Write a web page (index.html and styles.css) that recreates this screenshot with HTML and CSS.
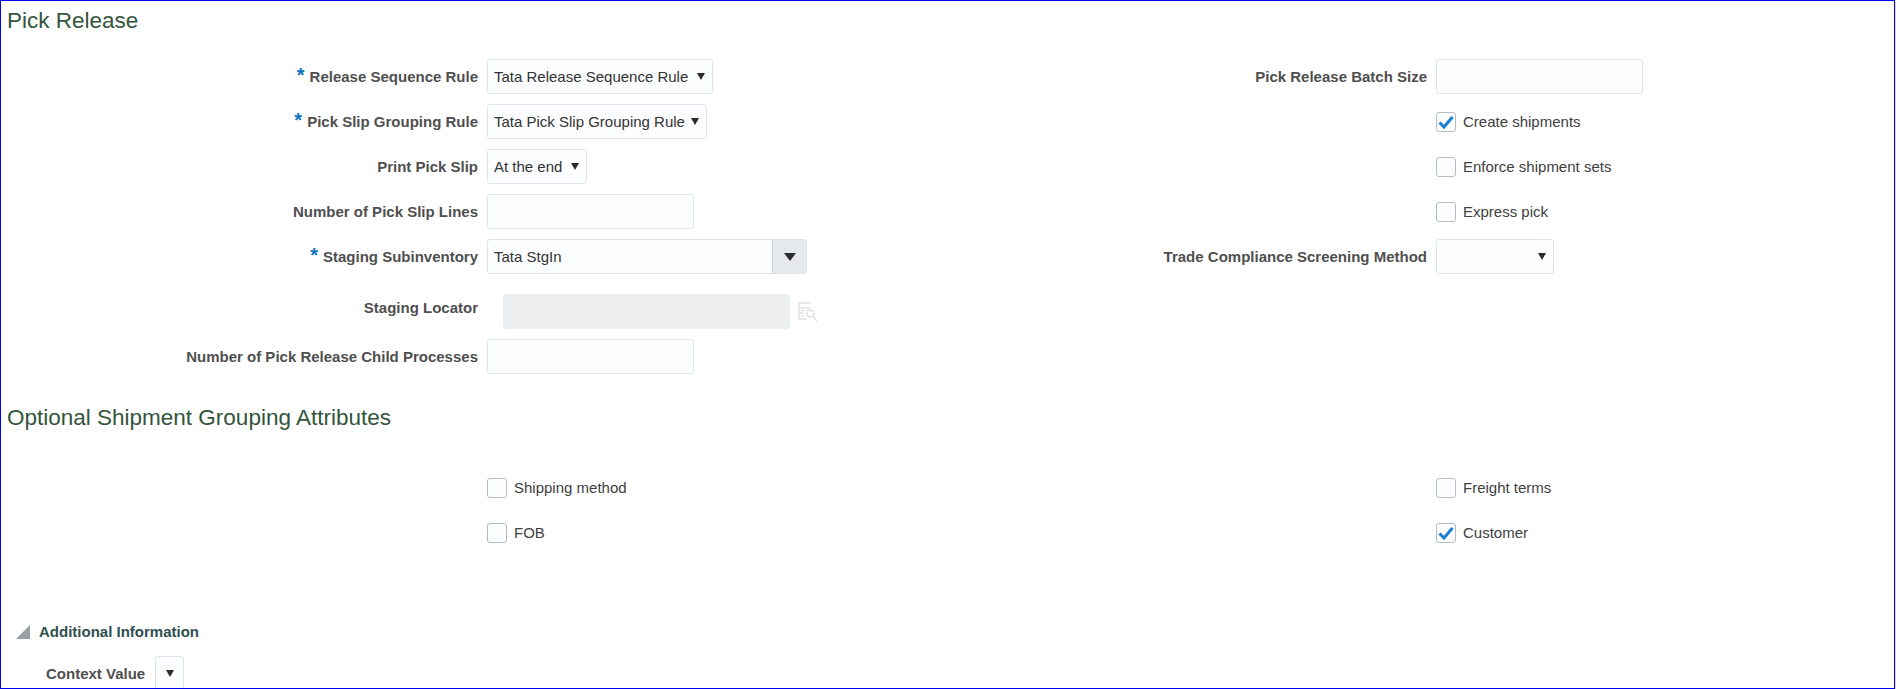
FILE: index.html
```html
<!DOCTYPE html>
<html>
<head>
  <title>Pick Release</title>
  <link rel="stylesheet" href="styles.css">
</head>

<body>

<div class="frame">
  <h2 class="section-title first">Pick Release</h2>

  <div class="columns">
    <div class="col">
      <div class="form-row">
        <label class="form-label"><span class="req">*</span>Release Sequence Rule</label>
        <div class="select w-release"><span class="value">Tata Release Sequence Rule</span><i class="arrow"></i></div>
      </div>
      <div class="form-row">
        <label class="form-label"><span class="req">*</span>Pick Slip Grouping Rule</label>
        <div class="select w-group"><span class="value">Tata Pick Slip Grouping Rule</span><i class="arrow"></i></div>
      </div>
      <div class="form-row">
        <label class="form-label">Print Pick Slip</label>
        <div class="select w-print"><span class="value">At the end</span><i class="arrow"></i></div>
      </div>
      <div class="form-row">
        <label class="form-label">Number of Pick Slip Lines</label>
        <input class="text-input" type="text">
      </div>
      <div class="form-row">
        <label class="form-label"><span class="req">*</span>Staging Subinventory</label>
        <div class="combo">
          <span class="value">Tata StgIn</span>
          <div class="combo-btn"><i class="arrow big"></i></div>
        </div>
      </div>
      <div class="form-row locator-row">
        <label class="form-label">Staging Locator</label>
        <div class="locator-box"></div>
        <svg class="lookup" width="20" height="20" viewBox="0 0 20 20" fill="none" stroke="#dfe2e4" stroke-width="1.5">
          <path d="M1 1h12M1 1v5h11M1 6v5h5M1 11v6h8M3 8.500h4M3 14h3"/>
          <circle cx="12.500" cy="11.500" r="3.500"/>
          <path d="M15.500 15l3.500 4"/>
        </svg>
      </div>
      <div class="form-row">
        <label class="form-label">Number of Pick Release Child Processes</label>
        <input class="text-input" type="text">
      </div>
    </div>

    <div class="col">
      <div class="form-row">
        <label class="form-label">Pick Release Batch Size</label>
        <input class="text-input" type="text">
      </div>
      <div class="form-row">
        <div class="form-label"></div>
        <div class="check checked">
          <svg width="16" height="14" viewBox="0 0 16 14"><path d="M1.500 7.500l4.500 4.500 8.500-10" fill="none" stroke="#1b7fd1" stroke-width="3"/></svg>
        </div>
        <span class="check-text">Create shipments</span>
      </div>
      <div class="form-row">
        <div class="form-label"></div>
        <div class="check"></div>
        <span class="check-text">Enforce shipment sets</span>
      </div>
      <div class="form-row">
        <div class="form-label"></div>
        <div class="check"></div>
        <span class="check-text">Express pick</span>
      </div>
      <div class="form-row">
        <label class="form-label">Trade Compliance Screening Method</label>
        <div class="select w-trade"><span class="value"></span><i class="arrow"></i></div>
      </div>
    </div>
  </div>

  <h2 class="section-title second">Optional Shipment Grouping Attributes</h2>

  <div class="columns">
    <div class="col">
      <div class="form-row">
        <div class="form-label"></div>
        <div class="check"></div>
        <span class="check-text">Shipping method</span>
      </div>
      <div class="form-row">
        <div class="form-label"></div>
        <div class="check"></div>
        <span class="check-text">FOB</span>
      </div>
    </div>
    <div class="col">
      <div class="form-row">
        <div class="form-label"></div>
        <div class="check"></div>
        <span class="check-text">Freight terms</span>
      </div>
      <div class="form-row">
        <div class="form-label"></div>
        <div class="check checked">
          <svg width="16" height="14" viewBox="0 0 16 14"><path d="M1.500 7.500l4.500 4.500 8.500-10" fill="none" stroke="#1b7fd1" stroke-width="3"/></svg>
        </div>
        <span class="check-text">Customer</span>
      </div>
    </div>
  </div>

  <div class="disclosure">
    <svg class="disclosure-icon" width="14" height="14" viewBox="0 0 14 14"><path d="M14 0v14H0z" fill="#9a9fa3"/></svg>
    <h3>Additional Information</h3>
  </div>

  <div class="context-row">
    <label class="context-label">Context Value</label>
    <div class="select w-context"><i class="arrow"></i></div>
  </div>
</div>

</body>
</html>
```

FILE: styles.css
```css
*{
  box-sizing: border-box;
}

html, body{
  margin: 0;
  height: 100%;
  overflow: hidden;
}

body{
  font-family: "Liberation Sans", Arial, sans-serif;
  font-size: 15px;
  color: #333;
  padding-right: 1px;
  background-color: #e4e4e8;
}

.frame{
  height: 689px;
  border: 1px solid #0000f0;
  padding: 1px;
  background-color: white;
  overflow: hidden;
}

.section-title{
  margin: 0;
  font-weight: normal;
  font-size: 22.5px;
  line-height: 28px;
  color: #33553c;
  padding-left: 5px;
}

.section-title.first{
  padding-top: 5px;
  height: 57px;
}

.section-title.second{
  margin-top: 20px;
  height: 66px;
}

.columns{
  display: flex;
}

.col{
  flex: 0 0 949px;
}

.form-row{
  display: flex;
  align-items: center;
  height: 35px;
  margin-bottom: 10px;
}

.form-label{
  flex: 0 0 476px;
  margin-right: 9px;
  text-align: right;
  font-weight: bold;
  color: #4f4f4f;
}

.req{
  color: #0f6fc0;
  font-size: 20px;
  line-height: 14px;
  margin-right: 5px;
}

.text-input{
  width: 207px;
  height: 35px;
  border: 1px solid #dfe4e8;
  border-radius: 3px;
  background-color: #fcfdfe;
  padding: 0 6px;
}

.select{
  display: flex;
  align-items: center;
  justify-content: space-between;
  height: 35px;
  padding: 0 7px 0 6px;
  border: 1px solid #dfe4e8;
  border-radius: 3px;
  background-color: #fcfdfe;
}

.value{
  color: #333;
}

.w-release{ width: 226px; }
.w-group{ width: 220px; }
.w-print{ width: 100px; }
.w-trade{ width: 118px; }
.w-context{ width: 29px; justify-content: center; padding: 0; }

.arrow{
  display: block;
  flex: none;
  width: 0;
  height: 0;
  border-left: 4px solid transparent;
  border-right: 4px solid transparent;
  border-top: 7px solid #2b2b2b;
}

.arrow.big{
  border-left-width: 6px;
  border-right-width: 6px;
  border-top-width: 8px;
}

.combo{
  display: flex;
  align-items: center;
  justify-content: space-between;
  width: 320px;
  height: 35px;
  padding-left: 6px;
  border: 1px solid #dfe4e8;
  border-radius: 3px;
  background-color: #fcfdfe;
}

.combo-btn{
  display: flex;
  align-items: center;
  justify-content: center;
  width: 34px;
  height: 33px;
  border-left: 1px solid #c9d0d6;
  background-color: #e6e9eb;
  border-radius: 0 3px 3px 0;
}

.locator-row{
  margin-top: 20px;
}

.locator-row .form-label{
  padding-bottom: 8px;
}

.locator-box{
  width: 287px;
  height: 35px;
  margin-left: 16px;
  background-color: #edeef0;
  border-radius: 3px;
}

.lookup{
  margin-left: 8px;
}

.check{
  display: flex;
  align-items: center;
  justify-content: center;
  width: 20px;
  height: 20px;
  border: 1px solid #b4bcc4;
  border-radius: 3px;
  background-color: #fcfdfe;
}

.check-text{
  margin-left: 7px;
  color: #404040;
}

.disclosure{
  display: flex;
  align-items: center;
  margin-top: 64px;
  padding-left: 14px;
}

.disclosure h3{
  margin: 0 0 0 9px;
  font-size: 15px;
  line-height: 16px;
  color: #2f4f4f;
}

.context-row{
  display: flex;
  align-items: center;
  margin-top: 16px;
  padding-left: 44px;
}

.context-label{
  margin-right: 10px;
  font-weight: bold;
  color: #4f4f4f;
}
```
